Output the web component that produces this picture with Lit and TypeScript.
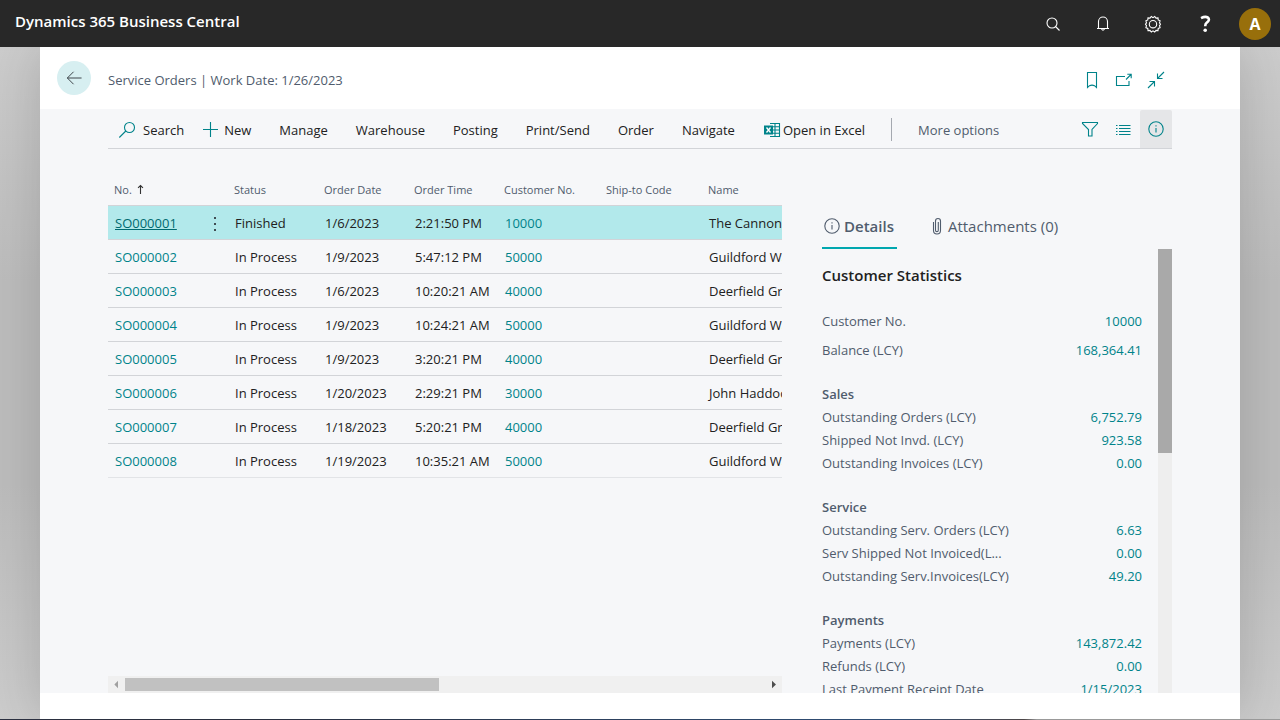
import { LitElement, html, css, svg, nothing, TemplateResult } from "lit";
import { customElement, property, state } from "lit/decorators.js";
import { classMap } from "lit/directives/class-map.js";

interface ServiceOrder {
  no: string;
  status: string;
  date: string;
  time: string;
  customer: string;
  shipTo: string;
  name: string;
}

interface Stat {
  label: string;
  value: string;
}

interface StatGroup {
  title: string;
  rows: Stat[];
}

const orders: ServiceOrder[] = [
  { no: "SO000001", status: "Finished", date: "1/6/2023", time: "2:21:50 PM", customer: "10000", shipTo: "", name: "The Cannon Group" },
  { no: "SO000002", status: "In Process", date: "1/9/2023", time: "5:47:12 PM", customer: "50000", shipTo: "", name: "Guildford Water" },
  { no: "SO000003", status: "In Process", date: "1/6/2023", time: "10:20:21 AM", customer: "40000", shipTo: "", name: "Deerfield Graphics" },
  { no: "SO000004", status: "In Process", date: "1/9/2023", time: "10:24:21 AM", customer: "50000", shipTo: "", name: "Guildford Water" },
  { no: "SO000005", status: "In Process", date: "1/9/2023", time: "3:20:21 PM", customer: "40000", shipTo: "", name: "Deerfield Graphics" },
  { no: "SO000006", status: "In Process", date: "1/20/2023", time: "2:29:21 PM", customer: "30000", shipTo: "", name: "John Haddock" },
  { no: "SO000007", status: "In Process", date: "1/18/2023", time: "5:20:21 PM", customer: "40000", shipTo: "", name: "Deerfield Graphics" },
  { no: "SO000008", status: "In Process", date: "1/19/2023", time: "10:35:21 AM", customer: "50000", shipTo: "", name: "Guildford Water" },
];

const summary: Stat[] = [
  { label: "Customer No.", value: "10000" },
  { label: "Balance (LCY)", value: "168,364.41" },
];

const groups: StatGroup[] = [
  {
    title: "Sales",
    rows: [
      { label: "Outstanding Orders (LCY)", value: "6,752.79" },
      { label: "Shipped Not Invd. (LCY)", value: "923.58" },
      { label: "Outstanding Invoices (LCY)", value: "0.00" },
    ],
  },
  {
    title: "Service",
    rows: [
      { label: "Outstanding Serv. Orders (LCY)", value: "6.63" },
      { label: "Serv Shipped Not Invoiced(L...", value: "0.00" },
      { label: "Outstanding Serv.Invoices(LCY)", value: "49.20" },
    ],
  },
  {
    title: "Payments",
    rows: [
      { label: "Payments (LCY)", value: "143,872.42" },
      { label: "Refunds (LCY)", value: "0.00" },
      { label: "Last Payment Receipt Date", value: "1/15/2023" },
    ],
  },
];

const glyphs: Record<string, TemplateResult> = {
  find: svg`<circle cx="8" cy="8" r="5"/><path d="M11.5 11.5l4 4"/>`,
  bell: svg`<path d="M4.5 13V6.500a4.500 4.500 0 0 1 9 0V13M3 13.500h12M7.500 14q1.500 2.200 3 0"/>`,
  gear: svg`<path d="M7.300 1.500L9 2.600l1.700-1.100 1.300 1.600 2-.2.200 2 1.900.9-.6 2 1 1.400-1 1.500.6 2-1.900.8-.2 2.100-2-.2-1.300 1.600L9 15.900l-1.700 1.100L6 15.400l-2 .2-.2-2.100-1.900-.8.6-2-1-1.500 1-1.400-.6-2 1.900-.9.2-2 2 .2z"/><circle cx="9" cy="9.200" r="3.700"/>`,
  help: svg`<path stroke-width="2.600" d="M5 3.200q4.200-2.200 6.800-.7c1.900 1.500 1.100 3.500-.9 5.100q-1.700 1.300-1.700 3.600"/><circle class="dot" cx="9.200" cy="15.200" r="1.800"/>`,
  back: svg`<path d="M17.500 9H1.500M8.500 2l-7 7 7 7"/>`,
  bookmark: svg`<path d="M4.500 1.500h9v15l-2-1.800q-2.500-1.200-5 0l-2 1.800z"/>`,
  popout: svg`<path d="M10 5.500H1.500v9h12.500V10M11 8.500L16 3.500M12.300 3.300h3.900v3.900"/>`,
  collapse: svg`<path d="M1 17l6.500-6.500M2.500 10.500h5v5M17 1l-6.500 6.500M15.500 7.500h-5v-5"/>`,
  search: svg`<circle cx="11.500" cy="6.500" r="5"/><path d="M7.800 10L1.300 16.500"/>`,
  plus: svg`<path d="M8.500 1v15M1 8.500h15"/>`,
  filter: svg`<path d="M1.500 2.500h15v1L11 9.500v6.500H7.500V9.500L1.500 3.500z"/>`,
  list: svg`<path d="M2 5.500h1.500M5 5.500h11.500M2 8.500h1.500M5 8.500h11.500M2 11.500h1.500M5 11.500h11.500M2 14.500h1.500M5 14.500h11.500"/>`,
  info: svg`<circle cx="9" cy="9" r="7.200"/><path d="M9 8v4.500M9 5.300v1.200"/>`,
  clip: svg`<path d="M5.500 5v8.500a3.300 3.300 0 0 0 7 0V4a2.500 2.500 0 0 0-5 0v9.200a1.300 1.300 0 0 0 2.800 0V5"/>`,
  excel: svg`<path d="M7 2.500h9.500v13H7M8 5.800h8.500M8 9h8.500M8 12.200h8.500M12 2.500v13"/><path class="fill" d="M1 4.500h9v9H1z"/><path class="cut" d="M3.500 6.500l4 5M7.500 6.500l-4 5"/>`,
  sort: svg`<path stroke-width="1.800" d="M9 16.500V2.500M5 6.500l4-4 4 4"/>`,
  dots: svg`<path class="fill" d="M8 2h2v2H8zM8 8h2v2H8zM8 14h2v2H8z"/>`,
  left: svg`<path class="dot" d="M11.500 3v12L5.500 9z"/>`,
  right: svg`<path class="dot" d="M6.500 3v12L13 9z"/>`,
};

@customElement("bc-icon")
export class BcIcon extends LitElement {
  @property() name = "";
  @property({ type: Number }) size = 18;

  static styles = css`
    :host { display: inline-flex; flex: none; }
    svg { display: block; fill: none; stroke: currentColor; stroke-width: 1.1; }
    .dot { fill: currentColor; stroke: none; }
    .fill { fill: currentColor; stroke: none; }
    .cut { stroke: #ffffff; stroke-width: 1.3; }
  `;

  render() {
    return html`<svg width=${this.size} height=${this.size} viewBox="0 0 18 18" aria-hidden="true">${glyphs[this.name] ?? nothing}</svg>`;
  }
}

@customElement("app-root")
export class AppRoot extends LitElement {
  @state() private selected = "SO000001";
  @state() private tab = "details";

  static styles = css`
    :host {
      display: flex;
      flex-direction: column;
      height: 100vh;
      overflow: hidden;
      box-sizing: border-box;
      font-family: "Open Sans", "Noto Sans", sans-serif;
      font-size: 13px;
      line-height: 20px;
      color: #212121;
      --teal: #00838a;
      --slate: #505c6d;
      --panel: #f6f7f9;
      --rule: #d2d4d8;
    }
    * { box-sizing: border-box; }
    button {
      font: inherit;
      color: inherit;
      background: none;
      border: 0;
      padding: 0;
      margin: 0;
      cursor: pointer;
      display: inline-flex;
      align-items: center;
      justify-content: center;
      white-space: nowrap;
    }
    a { color: var(--teal); text-decoration: none; }
    h1, h2, h3, dl, dd, dt { margin: 0; font-size: inherit; font-weight: inherit; }

    .topbar {
      flex: none;
      height: 47px;
      padding: 0 9px 0 15px;
      display: flex;
      align-items: center;
      justify-content: space-between;
      background: #282828;
      color: #ffffff;
    }
    .brand { font-size: 15px; font-weight: 600; padding-bottom: 6px; color: #ffffff; }
    .global { display: flex; align-items: center; gap: 14px; }
    .global .tool { width: 36px; height: 36px; }
    .global .help { margin-left: 2px; }
    .global .avatar {
      width: 32px;
      height: 32px;
      border-radius: 50%;
      background: #986f0b;
      font-size: 16px;
      font-weight: 700;
      margin-left: 2px;
    }

    .stage {
      flex: 1;
      min-height: 0;
      display: flex;
      overflow: hidden;
      padding: 0 40px;
      background: linear-gradient(180deg, #cccccc 0%, #bcbcbc 35%, #bcbcbc 65%, #cccccc 100%);
    }
    .sheet {
      flex: 1;
      min-width: 0;
      display: flex;
      flex-direction: column;
      background: #ffffff;
      padding-bottom: 26px;
      box-shadow: 0 0 50px rgba(0, 0, 0, 0.16);
    }
    .heading {
      flex: none;
      height: 62px;
      padding: 0 68px 0 17px;
      display: flex;
      align-items: center;
      color: var(--slate);
    }
    .back {
      width: 34px;
      height: 34px;
      border-radius: 50%;
      background: #d7eff1;
      color: #3b4348;
      margin-right: 17px;
    }
    .title { flex: 1; font-size: 13px; padding-top: 4px; }
    .window-tools { display: flex; color: var(--teal); padding-top: 4px; }
    .window-tools button { width: 32px; height: 32px; }

    .body {
      flex: 1;
      min-height: 0;
      display: flex;
      flex-direction: column;
      padding: 1px 68px 0;
      background: var(--panel);
    }
    .actions {
      flex: none;
      height: 39px;
      display: flex;
      align-items: stretch;
      border-bottom: 1px solid var(--rule);
    }
    .menu { flex: 1; display: flex; align-items: center; gap: 28px; padding-left: 10px; }
    .menu button { height: 100%; padding-top: 2px; }
    .menu bc-icon { color: var(--teal); }
    .menu .search { gap: 7px; }
    .menu .new { gap: 4px; margin-left: -10px; }
    .menu .excel { gap: 2px; }
    .menu .more { color: var(--slate); }
    .divider { width: 1px; height: 23px; margin: 0 -2px; background: #a5a9b0; }
    .view { display: flex; color: var(--teal); }
    .view button { width: 33px; padding: 0 2px 1px 0; }
    .view .on { width: 32px; padding-right: 1px; background: #e5e6e8; border-radius: 2px 2px 0 0; }

    .work {
      flex: 1;
      min-height: 0;
      display: grid;
      grid-template-columns: minmax(0, 1fr) 350px;
      gap: 40px;
    }
    .list { min-height: 0; min-width: 0; display: flex; flex-direction: column; padding-top: 23px; }
    .viewport { flex: 1; min-height: 0; overflow: hidden; }
    table { table-layout: fixed; width: 900px; border-collapse: separate; border-spacing: 0; text-align: left; }
    th, td { height: 34px; padding: 0 0 0 7px; border-bottom: 1px solid var(--rule); white-space: nowrap; font-weight: 400; }
    th { font-size: 11px; padding: 2px 0 0 6px; color: var(--slate); }
    th bc-icon { vertical-align: -1px; color: #333333; }
    tr:last-child td { border-bottom-color: #e2e4e7; }
    thead tr:last-child th { border-bottom-color: var(--rule); }
    .c-no { width: 91px; }
    .c-menu { width: 29px; }
    .c-std { width: 90px; }
    .c-wide { width: 102px; }
    .row-menu { color: #3f4c52; vertical-align: middle; }
    .selected td { background: #b2e9eb; }
    .selected .key { text-decoration: underline; color: #006a70; }

    .hbar { flex: none; height: 17px; display: flex; align-items: center; background: #f0f0f0; }
    .hbar button { width: 17px; height: 17px; color: #4d4d4d; }
    .hbar button:disabled { color: #a0a0a0; }
    .htrack { flex: 1; display: flex; }
    .hthumb { width: 49%; height: 13px; background: #c1c1c1; }

    .side { min-height: 0; display: flex; flex-direction: column; padding-top: 54px; }
    .tabs { flex: none; display: flex; gap: 30px; height: 46px; }
    .tabs button {
      gap: 3px;
      padding: 2px 3px 0 1px;
      font-size: 15px;
      color: var(--slate);
      border-bottom: 2px solid transparent;
    }
    .tabs .on { font-weight: 600; border-bottom-color: #00a7af; }
    .tabs .files { gap: 2px; }
    .scroll { flex: 1; min-height: 0; display: flex; }
    .facts { flex: 1; overflow: hidden; padding: 16px 16px 0 0; }
    .facts h2 { font-size: 15px; font-weight: 600; line-height: 20px; margin-bottom: 22px; }
    .facts h3 { font-weight: 600; color: var(--slate); line-height: 23px; margin-top: 21px; }
    .facts dl div { display: flex; justify-content: space-between; line-height: 23px; color: var(--slate); }
    .facts .summary div { line-height: 29px; }
    .facts .summary + h3 { margin-top: 18px; }
    .vbar { width: 14px; background: #eeeeee; }
    .vthumb { height: 46%; background: #a9a9a9; }

    .edge { flex: none; height: 1px; background: linear-gradient(90deg, #2b3040 0 20%, #2f4f77 70%, #4d4648 80%, #999999 81%); }
  `;

  private fact(s: Stat) {
    return html`<div><dt>${s.label}</dt><dd><a href="#">${s.value}</a></dd></div>`;
  }

  private row(o: ServiceOrder) {
    const on = o.no === this.selected;
    return html`
      <tr class=${classMap({ selected: on })} @click=${() => (this.selected = o.no)}>
        <td><a class="key" href="#">${o.no}</a></td>
        <td>${on ? html`<button class="row-menu" aria-label="Row options"><bc-icon name="dots"></bc-icon></button>` : nothing}</td>
        <td>${o.status}</td>
        <td>${o.date}</td>
        <td>${o.time}</td>
        <td><a href="#">${o.customer}</a></td>
        <td>${o.shipTo}</td>
        <td>${o.name}</td>
      </tr>
    `;
  }

  render() {
    return html`
      <header class="topbar">
        <a class="brand" href="#">Dynamics 365 Business Central</a>
        <div class="global">
          <button class="tool" aria-label="Search"><bc-icon name="find"></bc-icon></button>
          <button class="tool" aria-label="Notifications"><bc-icon name="bell"></bc-icon></button>
          <button class="tool" aria-label="Settings"><bc-icon name="gear"></bc-icon></button>
          <button class="tool help" aria-label="Help"><bc-icon name="help"></bc-icon></button>
          <button class="avatar" aria-label="Account">A</button>
        </div>
      </header>
      <main class="stage">
        <div class="sheet">
          <div class="heading">
            <button class="back" aria-label="Back"><bc-icon name="back" size="16"></bc-icon></button>
            <h1 class="title">Service Orders | Work Date: 1/26/2023</h1>
            <div class="window-tools">
              <button aria-label="Bookmark"><bc-icon name="bookmark"></bc-icon></button>
              <button aria-label="Open in new window"><bc-icon name="popout"></bc-icon></button>
              <button aria-label="Collapse"><bc-icon name="collapse"></bc-icon></button>
            </div>
          </div>
          <div class="body">
            <nav class="actions">
              <div class="menu">
                <button class="search"><bc-icon name="search"></bc-icon>Search</button>
                <button class="new"><bc-icon name="plus"></bc-icon>New</button>
                <button>Manage</button>
                <button>Warehouse</button>
                <button>Posting</button>
                <button>Print/Send</button>
                <button>Order</button>
                <button>Navigate</button>
                <button class="excel"><bc-icon name="excel"></bc-icon>Open in Excel</button>
                <span class="divider"></span>
                <button class="more">More options</button>
              </div>
              <div class="view">
                <button aria-label="Filter"><bc-icon name="filter"></bc-icon></button>
                <button aria-label="List view"><bc-icon name="list"></bc-icon></button>
                <button class="on" aria-label="Details pane"><bc-icon name="info"></bc-icon></button>
              </div>
            </nav>
            <div class="work">
              <section class="list">
                <div class="viewport">
                  <table>
                    <colgroup>
                      <col class="c-no" /><col class="c-menu" />
                      <col class="c-std" /><col class="c-std" /><col class="c-std" />
                      <col class="c-wide" /><col class="c-wide" /><col />
                    </colgroup>
                    <thead>
                      <tr>
                        <th>No. <bc-icon name="sort" size="11"></bc-icon></th>
                        <th></th>
                        <th>Status</th>
                        <th>Order Date</th>
                        <th>Order Time</th>
                        <th>Customer No.</th>
                        <th>Ship-to Code</th>
                        <th>Name</th>
                      </tr>
                    </thead>
                    <tbody>${orders.map((o) => this.row(o))}</tbody>
                  </table>
                </div>
                <div class="hbar">
                  <button disabled aria-label="Scroll left"><bc-icon name="left" size="11"></bc-icon></button>
                  <div class="htrack"><div class="hthumb"></div></div>
                  <button aria-label="Scroll right"><bc-icon name="right" size="11"></bc-icon></button>
                </div>
              </section>
              <aside class="side">
                <div class="tabs">
                  <button class=${classMap({ on: this.tab === "details" })} @click=${() => (this.tab = "details")}>
                    <bc-icon name="info"></bc-icon>Details
                  </button>
                  <button class=${classMap({ files: true, on: this.tab === "files" })} @click=${() => (this.tab = "files")}>
                    <bc-icon name="clip"></bc-icon>Attachments (0)
                  </button>
                </div>
                <div class="scroll">
                  <div class="facts">
                    <h2>Customer Statistics</h2>
                    <dl class="summary">${summary.map((s) => this.fact(s))}</dl>
                    ${groups.map((g) => html`<h3>${g.title}</h3><dl>${g.rows.map((s) => this.fact(s))}</dl>`)}
                  </div>
                  <div class="vbar"><div class="vthumb"></div></div>
                </div>
              </aside>
            </div>
          </div>
        </div>
      </main>
      <div class="edge"></div>
    `;
  }
}
